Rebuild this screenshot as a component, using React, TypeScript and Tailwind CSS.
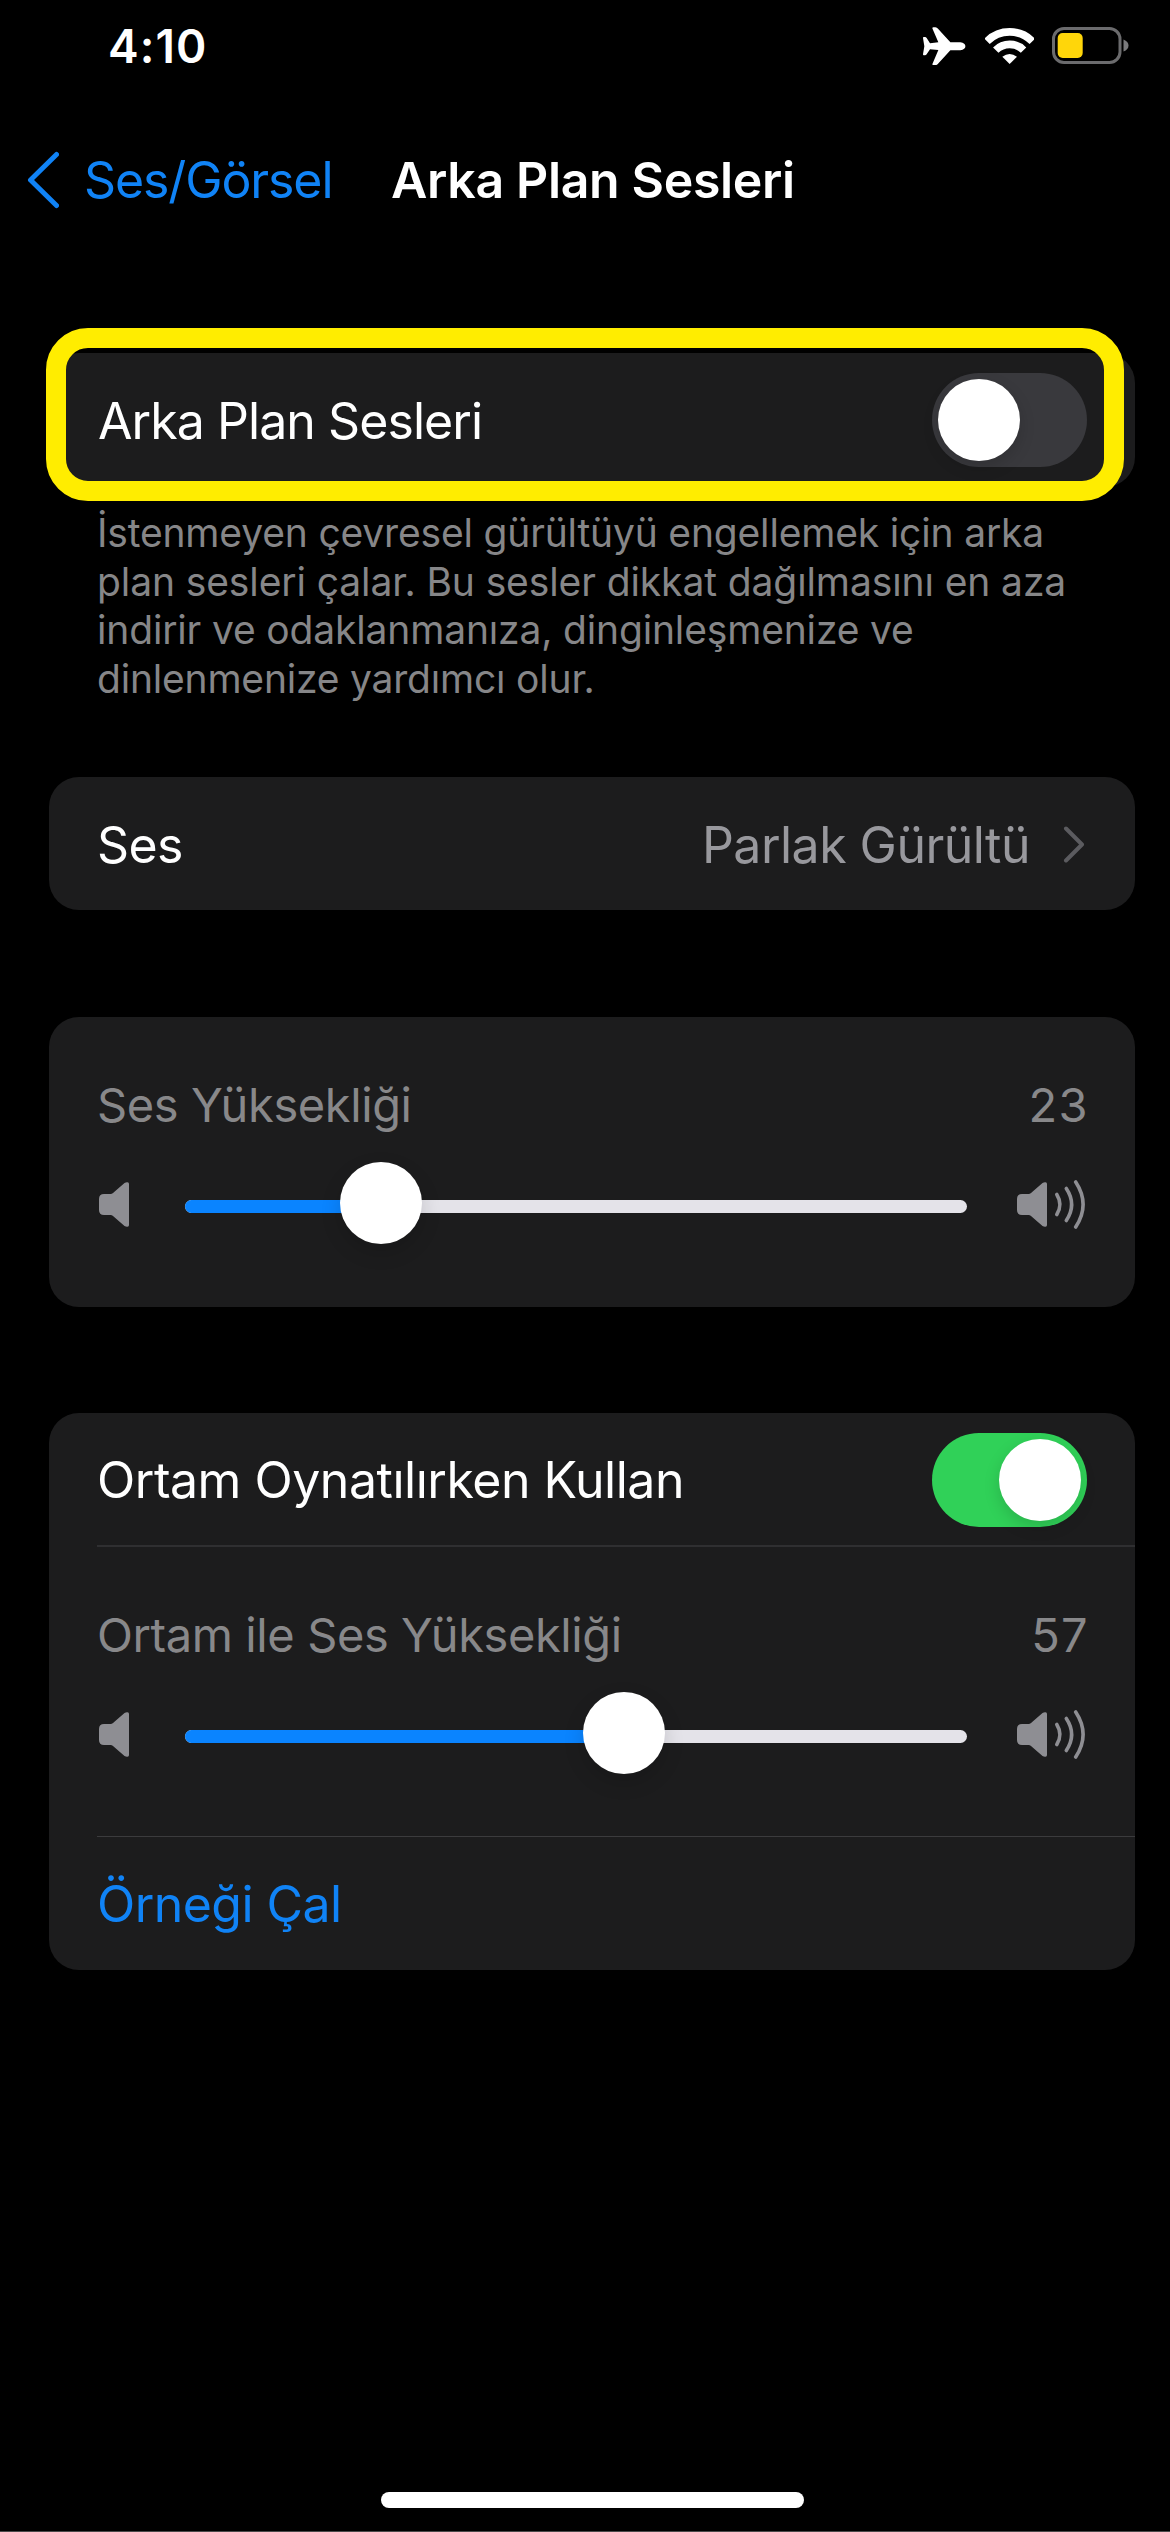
import type { ReactNode } from "react";

function StatusBar() {
  return (
    <header className="flex h-[92px] items-center justify-between pr-[41px] pl-[108px]">
      <span className="text-[46px] leading-none font-semibold tracking-[1.1px]">4:10</span>
      <div className="flex items-center">
        <svg className="mr-[19px] h-[38.4px] w-[42.4px]" viewBox="0 0 127 115" fill="#fff">
          <path d="M82 45.500 L45 5 Q42 1 37 .5 H31 Q27 1 28.500 5 L46 46 L21 48.500 L11 33 Q9 30 6 30 H2 Q0 30 0 33 L4 57.500 L0 82 Q0 85 2 85 H6 Q9 85 11 82 L21 66.500 L46 69 L28.500 110 Q27 114 31 114.500 H37 Q42 114 45 110 L82 69.500 H112 Q127 67 127 57.500 Q127 48 112 45.500 Z" />
        </svg>
        <svg className="mr-[18px] h-[36px] w-[49.300px]" viewBox="0 0 148 108" fill="none" stroke="#fff" strokeWidth="23">
          <path d="M6 40 A96 96 0 0 1 142 40" />
          <path d="M32.300 66.300 A59 59 0 0 1 115.700 66.300" />
          <path d="M74 108 L52 86 Q74 70 96 86 Z" fill="#fff" stroke="none" />
        </svg>
        <svg className="h-[37px] w-[77px]" viewBox="0 0 77 37" fill="none">
          <rect x="1.500" y="1.500" width="66.500" height="34" rx="10.500" stroke="#6b6b6d" strokeWidth="3" />
          <rect x="5.700" y="6" width="25" height="25" rx="5" fill="#ffd60a" />
          <path d="M71.500 12.500 Q76.500 14.500 76.500 18.500 Q76.500 22.500 71.500 24.500 Z" fill="#7b7b7d" />
        </svg>
      </div>
    </header>
  );
}

function NavBar() {
  return (
    <nav className="flex h-[176px] items-center pl-[27px]">
      <svg className="mr-[25px] h-[58px] w-[32px]" viewBox="0 0 32 58" fill="none" stroke="#1083f6" strokeWidth="5" strokeLinecap="round" strokeLinejoin="round">
        <path d="M29.500 3.500 L3.500 29 L29.500 54.500" />
      </svg>
      <span className="w-[307px] text-[50px] leading-none tracking-[-1.1px] whitespace-nowrap text-[#1083f6]">Ses/Görsel</span>
      <h1 className="text-[50px] leading-none font-semibold tracking-[-0.35px] whitespace-nowrap">Arka Plan Sesleri</h1>
    </nav>
  );
}

function Card({ className, children }: { className: string; children: ReactNode }) {
  return <section className={`rounded-[30px] bg-[#1c1c1d] ${className}`}>{children}</section>;
}

function Toggle({ on }: { on: boolean }) {
  return (
    <div className={`flex h-[94px] w-[155px] items-center rounded-full px-1.5 ${on ? "justify-end bg-[#30d158]" : "justify-start bg-[#39393d]"}`}>
      <div className="size-[82px] rounded-full bg-white shadow-[0_6px_16px_rgba(0,0,0,0.15)]" />
    </div>
  );
}

const speakerBody =
  "M5 14 H11.500 Q13 14 14 13 L25.500 3 Q27 2 28.500 2.200 Q30 2.500 30 4 V45 Q30 46.500 28.500 46.800 Q27 47 25.500 46 L14 36 Q13 35 11.500 35 H5 Q0 35 0 30 V19 Q0 14 5 14 Z";

function SpeakerLow() {
  return (
    <svg className="h-[49px] w-[31px] shrink-0" viewBox="0 0 31 49" fill="#8e8e93">
      <path d={speakerBody} />
    </svg>
  );
}

function SpeakerHigh() {
  return (
    <svg className="h-[49px] w-[69px] shrink-0" viewBox="0 0 69 49" fill="none" stroke="#8e8e93" strokeWidth="3.600" strokeLinecap="round">
      <path d={speakerBody} fill="#8e8e93" stroke="none" />
      <path d="M39.800 14.500 Q46 24.500 39.800 34.500" />
      <path d="M49.300 8.500 Q60 24.500 49.300 40.500" />
      <path d="M58.700 2 Q73.500 24.500 58.700 47" />
    </svg>
  );
}

function VolumeControl({ label, value, fill }: { label: string; value: number; fill: number }) {
  return (
    <div className="pt-[57px] pr-[49px] pl-[50px]">
      <div className="-ml-0.5 flex h-[60px] items-center justify-between text-[47px] leading-none text-[#88888a]">
        <span className="tracking-[-0.4px]">{label}</span>
        <span className="-mr-[3px] tracking-[1.35px]">{value}</span>
      </div>
      <div className="mt-[29px] flex h-[82px] items-center">
        <SpeakerLow />
        <div className="relative mr-[50px] ml-[55px] flex h-[82px] flex-1 items-center">
          <div className="mt-[5px] h-[13px] w-full overflow-hidden rounded-full bg-[#e4e3e9]">
            <div className="h-full bg-[#0a84ff]" style={{ width: fill + 41 }} />
          </div>
          <div className="absolute -top-px size-[82px] rounded-full bg-white shadow-[0_8px_20px_rgba(0,0,0,0.15)]" style={{ left: fill }} />
        </div>
        <SpeakerHigh />
      </div>
    </div>
  );
}

export default function App() {
  return (
    <div className="flex h-[2532px] w-[1170px] flex-col overflow-hidden border-b border-[#4a4a4a] bg-black font-[Inter,sans-serif] text-white">
      <StatusBar />
      <NavBar />
      <main className="flex flex-col pr-[35px] pl-[49px]">
        <div className="relative mt-[85px]">
          <Card className="flex h-[134px] items-center justify-between pr-12 pl-[49px]">
            <span className="mt-0.5 text-[50px] leading-none tracking-[-0.93px]">Arka Plan Sesleri</span>
            <Toggle on={false} />
          </Card>
          <div className="absolute -top-[25px] -left-[3px] h-[173px] w-[1078px] rounded-[42px] border-[20px] border-[#ffed00]" />
        </div>
        <p className="mt-[22px] pl-[48px] text-[39px] leading-[48.5px] whitespace-nowrap text-[#868688]">
          <span className="block tracking-[-0.17px]">İstenmeyen çevresel gürültüyü engellemek için arka</span>
          <span className="block tracking-[-0.1px]">plan sesleri çalar. Bu sesler dikkat dağılmasını en aza</span>
          <span className="block tracking-[-0.16px]">indirir ve odaklanmanıza, dinginleşmenize ve</span>
          <span className="block tracking-[-0.2px]">dinlenmenize yardımcı olur.</span>
        </p>
        <Card className="mt-[74px] flex h-[133px] items-center pt-0.5 pr-[50px] pl-[48px]">
          <span className="flex-1 text-[50px] leading-none tracking-[-0.6px]">Ses</span>
          <span className="mr-[33px] text-[50px] leading-none tracking-[-0.52px] text-[#98989d]">Parlak Gürültü</span>
          <svg className="h-[37px] w-[22px]" viewBox="0 0 22 37" fill="none" stroke="#5b5b5f" strokeWidth="4" strokeLinecap="round" strokeLinejoin="round">
            <path d="M3 2.500 L19 18.500 L3 34.500" />
          </svg>
        </Card>
        <Card className="mt-[107px] h-[290px]">
          <VolumeControl label="Ses Yüksekliği" value={23} fill={155} />
        </Card>
        <Card className="mt-[106px] h-[557px]">
          <div className="flex h-[132px] items-center justify-between pt-0.5 pr-12 pl-[48px]">
            <span className="text-[50px] leading-none tracking-[-0.48px]">Ortam Oynatılırken Kullan</span>
            <Toggle on />
          </div>
          <div className="ml-12 h-0.5 bg-[#2f2f31]" />
          <div className="h-[289px]">
            <VolumeControl label="Ortam ile Ses Yüksekliği" value={57} fill={398} />
          </div>
          <div className="ml-12 h-px bg-[#3b3b3d]" />
          <div className="flex h-[133px] items-center pl-[48px] text-[50px] leading-none tracking-[-0.55px] text-[#1083f6]">Örneği Çal</div>
        </Card>
      </main>
      <div className="mt-auto mb-[23px] ml-[381px] h-4 w-[423px] rounded-full bg-white" />
    </div>
  );
}
